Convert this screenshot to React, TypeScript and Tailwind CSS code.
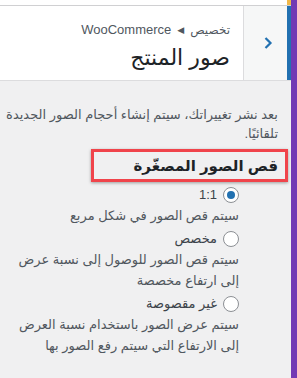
import React from 'react';

const FONT = "font-['Liberation_Sans','DejaVu_Sans',sans-serif]";

const OPTIONS = [
  {
    id: 'square',
    label: '1:1',
    checked: true,
    description: 'سيتم قص الصور في شكل مربع',
  },
  {
    id: 'custom',
    label: 'مخصص',
    checked: false,
    description: 'سيتم قص الصور للوصول إلى نسبة عرض إلى ارتفاع مخصصة',
  },
  {
    id: 'uncropped',
    label: 'غير مقصوصة',
    checked: false,
    description: 'سيتم عرض الصور باستخدام نسبة العرض إلى الارتفاع التي سيتم رفع الصور بها',
  },
];

function Radio({ checked }: { checked: boolean }) {
  return (
    <span className="flex h-4 w-4 shrink-0 items-center justify-center rounded-full border border-[#8c8f94] bg-white">
      {checked && <span className="h-2 w-2 rounded-full bg-[#2271b1]" />}
    </span>
  );
}

export default function App() {
  return (
    <div className={`flex h-[378px] w-[297px] overflow-hidden ${FONT}`}>
      {/* Customizer panel */}
      <div dir="rtl" className="flex w-[291px] flex-col bg-[#f0f0f1]">
        {/* top strip */}
        <div className="flex h-[6px] border-b border-[#d0d0d2] bg-white">
          <div className="w-[4px] bg-[#f0b849]" />
        </div>

        {/* Header */}
        <header className="flex h-[75px] border-b border-[#dcdcde] bg-white">
          <button className="flex w-[48px] items-center justify-center border-r-4 border-l border-r-[#2271b1] border-l-[#dcdcde] bg-[#f6f7f7] pl-1">
            <svg width="10" height="14" viewBox="0 0 10 14" fill="none">
              <path d="M2.5 2 L7.5 7 L2.5 12" stroke="#2271b1" strokeWidth="2.2" />
            </svg>
          </button>
          <div className="flex flex-col pr-[13px] pt-[14px]">
            <div className="flex items-center gap-[6px] text-[13px] leading-5 text-[#50575e]">
              <span className="text-[12px]">تخصيص</span>
              <span className="text-[9px]">◀</span>
              <span>WooCommerce</span>
            </div>
            <h1 className="mt-[4px] text-[22px] leading-7 text-[#1d2327]">صور المنتج</h1>
          </div>
        </header>

        {/* Body */}
        <div className="flex flex-col pr-[13px] pl-[6px] pt-[24px] text-[13px] text-[#50575e]">
          <p className="leading-[19px]">بعد نشر تغييراتك، سيتم إنشاء أحجام الصور الجديدة تلقائيًا.</p>

          <div className="relative mt-[13px] ml-[-6px] pl-[6px]">
            <h2 className="text-[15px] font-bold leading-5 text-[#1d2327]">قص الصور المصغّرة</h2>
            <div className="pointer-events-none absolute -top-[7px] right-[-10px] h-[33px] w-[197px] border-[3px] border-[#f0444b] shadow-[0_1px_3px_rgba(0,0,0,0.35)]" />
          </div>

          <div className="mt-[9px] mr-[39px] flex flex-col">
            {OPTIONS.map((opt) => (
              <div key={opt.id} className="mb-[3px]">
                <label className="flex h-[20px] items-center gap-[6px] text-[#3c434a]">
                  <Radio checked={opt.checked} />
                  <span>{opt.label}</span>
                </label>
                <p className="leading-[21px]">{opt.description}</p>
              </div>
            ))}
          </div>
        </div>
      </div>

      {/* right edge bar */}
      <div className="w-[6px] bg-[#7239b4]" />
    </div>
  );
}
